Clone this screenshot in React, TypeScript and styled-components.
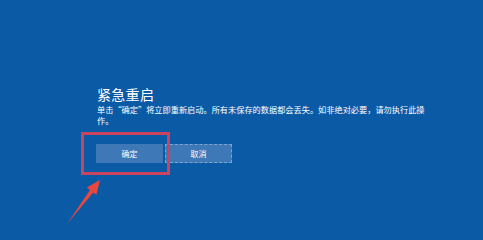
import React from "react";
import styled, { createGlobalStyle } from "styled-components";

const GlobalStyle = createGlobalStyle`
  html, body {
    margin: 0;
    padding: 0;
    background: #0b5aa6;
  }
  body {
    font-family: "Noto Sans CJK SC", "Noto Sans", sans-serif;
  }
`;

const Screen = styled.div`
  position: relative;
  width: 483px;
  height: 235px;
  overflow: hidden;
  background: #0b5aa6;
  color: #ffffff;
  padding: 84px 0 0 97px;
  box-sizing: border-box;
`;

const Dialog = styled.div`
  display: flex;
  flex-direction: column;
  width: 332px;
`;

const Title = styled.div`
  font-size: 14px;
  line-height: 20px;
  letter-spacing: 0.3px;
`;

const Message = styled.div`
  font-size: 8.2px;
  line-height: 11px;
`;

const ButtonRow = styled.div`
  position: relative;
  display: flex;
  gap: 2px;
  margin-top: 18px;
  margin-left: -1px;
`;

const Button = styled.button<{ $focused?: boolean }>`
  width: 67px;
  height: 19px;
  padding: 0;
  box-sizing: border-box;
  background: #3f78b6;
  color: #ffffff;
  font-family: inherit;
  font-size: 8px;
  border: 1px ${(p) => (p.$focused ? "dashed #7aa6d4" : "solid #3f78b6")};
  cursor: pointer;
`;

const Highlight = styled.div`
  position: absolute;
  left: -15px;
  top: -12px;
  width: 89px;
  height: 43px;
  box-sizing: border-box;
  border: 3px solid #c9445c;
  pointer-events: none;
`;

const ArrowLayer = styled.svg`
  position: absolute;
  left: 0;
  top: 0;
  width: 483px;
  height: 235px;
  pointer-events: none;
`;

export default function App() {
  return (
    <>
      <GlobalStyle />
      <Screen>
        <Dialog>
          <Title>紧急重启</Title>
          <Message>
            单击“确定”将立即重新启动。所有未保存的数据都会丢失。如非绝对必要，请勿执行此操作。
          </Message>
          <ButtonRow>
            <Button>确定</Button>
            <Button $focused>取消</Button>
            <Highlight />
          </ButtonRow>
        </Dialog>
        <ArrowLayer viewBox="0 0 483 235">
          <polygon
            points="67,224 93.2,192.4 96.4,194.8 100,180 86.8,187.6 90,190"
            fill="#e8473e"
          />
        </ArrowLayer>
      </Screen>
    </>
  );
}
